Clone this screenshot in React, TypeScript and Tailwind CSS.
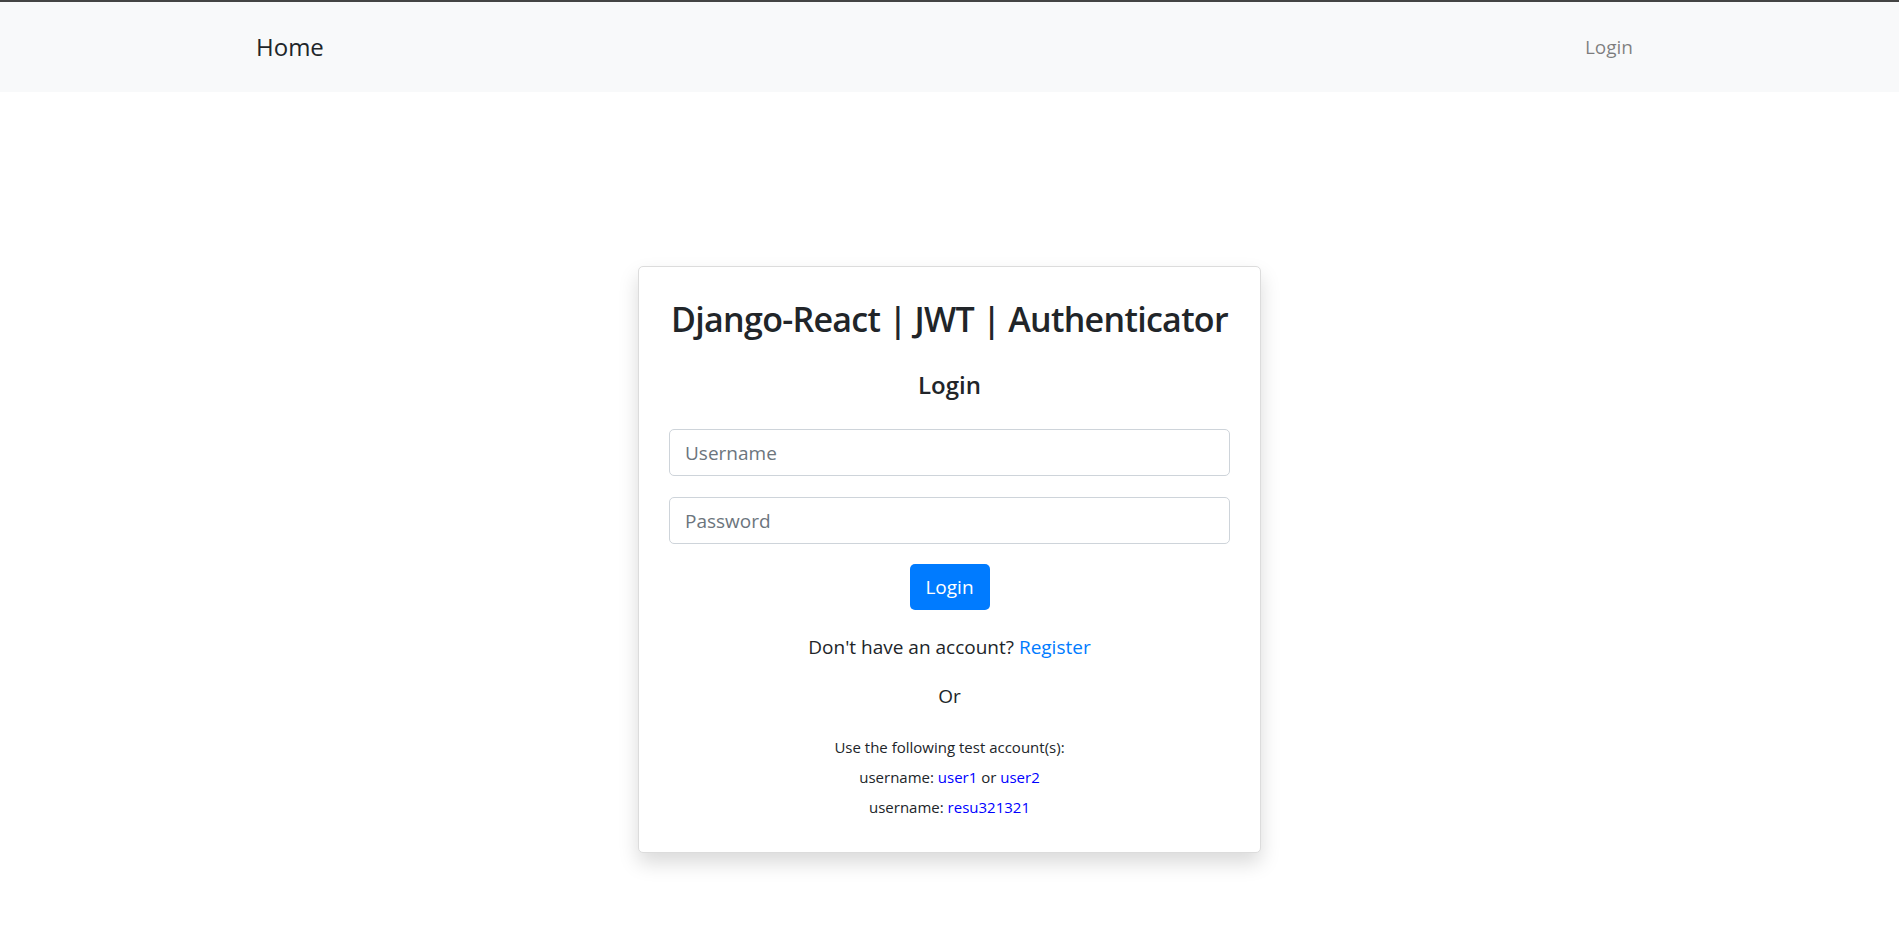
export default function App() {
  const font = { fontFamily: '"Open Sans", "Noto Sans", Arial, sans-serif' }

  return (
    <div className="min-h-screen bg-white text-[#212529]" style={font}>
      <nav className="border-t-2 border-[#444444] bg-[#f8f9fa]">
        <div className="mx-auto flex h-[90px] max-w-[1425px] items-center justify-between px-[19px]">
          <a href="#" className="text-[24px] leading-[30px] text-[#212529]">Home</a>
          <a href="#" className="px-[10px] text-[19px] leading-[30px] text-black/50">Login</a>
        </div>
      </nav>

      <div className="flex justify-center pt-[174px]">
        <div className="w-[623px] rounded-[5px] border border-[#dcdcdc] bg-white px-[30px] pt-[28px] pb-[33px] text-center shadow-[0_10px_20px_rgba(0,0,0,0.15)]">
          <h2 className="whitespace-nowrap text-[34px] font-semibold leading-[48px] tracking-[-0.7px]">Django-React | JWT | Authenticator</h2>
          <h5 className="mt-[27px] text-[24px] font-semibold leading-[30px]">Login</h5>

          <div className="mt-[29px] flex flex-col gap-[21px]">
            <input
              type="text"
              placeholder="Username"
              className="h-[47px] w-full rounded-[5px] border border-[#ced4da] px-[15px] text-[19px] text-[#495057] placeholder:text-[#6c757d] focus:outline-none"
            />
            <input
              type="password"
              placeholder="Password"
              className="h-[47px] w-full rounded-[5px] border border-[#ced4da] px-[15px] text-[19px] text-[#495057] placeholder:text-[#6c757d] focus:outline-none"
            />
          </div>

          <button className="mt-[20px] h-[46px] w-[80px] rounded-[5px] bg-[#007bff] text-[19px] text-white">Login</button>

          <p className="mt-[22px] text-[19px] leading-[30px]">
            Don't have an account? <a href="#" className="text-[#007bff]">Register</a>
          </p>
          <p className="mt-[19px] text-[19px] leading-[30px]">Or</p>

          <div className="mt-[24px] flex flex-col gap-[6px] text-[15px] leading-[24px]">
            <p>Use the following test account(s):</p>
            <p>
              username: <a href="#" className="text-[#0000ff]">user1</a> or <a href="#" className="text-[#0000ff]">user2</a>
            </p>
            <p>
              username: <a href="#" className="text-[#0000ff]">resu321321</a>
            </p>
          </div>
        </div>
      </div>
    </div>
  )
}
